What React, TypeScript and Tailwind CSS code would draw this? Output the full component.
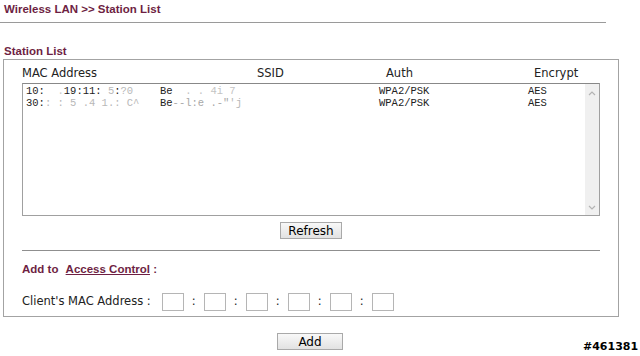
import type { ReactNode } from "react";

const maroon = "text-[#6e1f43]";

type Row = {
  mac: ReactNode;
  ssid: ReactNode;
  auth: string;
  enc: string;
};

const rows: Row[] = [
  {
    mac: (
      <>
        10:<span className="text-[#c8c8c8]">&nbsp; .</span>19:11:<span className="text-[#b8b8b8]"> 5</span>:<span className="text-[#b8b8b8]">?0</span>
      </>
    ),
    ssid: (
      <>
        Be<span className="text-[#c4c4c4]">&nbsp; . . 4i 7&nbsp;&nbsp;</span>
      </>
    ),
    auth: "WPA2/PSK",
    enc: "AES",
  },
  {
    mac: (
      <>
        30:<span className="text-[#b8b8b8]">: : 5 .4 1.: C^</span>
      </>
    ),
    ssid: (
      <>
        Be<span className="text-[#a8a8a8]">--l:e .-"</span>
        <span className="text-[#b8b8b8]">'j</span>
      </>
    ),
    auth: "WPA2/PSK",
    enc: "AES",
  },
];

function Chevron({ up }: { up?: boolean }) {
  return (
    <svg width="8" height="6" viewBox="0 0 8 6" className="block">
      <path
        d={up ? "M1 5 L4 2 L7 5" : "M1 1 L4 4 L7 1"}
        fill="none"
        stroke="#b4b4b4"
        strokeWidth="1.2"
      />
    </svg>
  );
}

function Button({ label, w }: { label: string; w: string }) {
  return (
    <button
      className={`${w} h-[17px] border border-[#a9a9a9] bg-gradient-to-b from-[#f8f8f8] to-[#e2e2e2] text-[12px] leading-[14px] text-black font-['DejaVu_Sans',sans-serif]`}
    >
      {label}
    </button>
  );
}

export default function App() {
  return (
    <div className="relative h-[356px] w-[640px] overflow-hidden bg-white font-['DejaVu_Sans',sans-serif] text-[11.5px] text-[#222]">

      {/* TITLE */}
      <div className="h-[23px] w-[606px] border-b border-[#9a9a9a] pl-[4px] pt-[2px]">
        <div className={`font-['Liberation_Sans',Arial,sans-serif] text-[11.5px] font-bold leading-[14px] ${maroon}`}>
          Wireless LAN &gt;&gt; Station List
        </div>
      </div>

      {/* SECTION HEADING */}
      <div className={`mt-[21px] h-[15px] pl-[4px] font-['Liberation_Sans',Arial,sans-serif] text-[11.5px] font-bold leading-[14px] ${maroon}`}>
        Station List
      </div>

      {/* BOX */}
      <div className="ml-[3px] box-border h-[258px] w-[616px] border border-[#a3a3a3] px-[18px] pt-[6px]">

        {/* HEADER */}
        <div className="grid h-[14px] grid-cols-[235px_129px_148px_1fr] leading-[14px] text-[#222]">
          <div>MAC Address</div>
          <div>SSID</div>
          <div>Auth</div>
          <div>Encrypt</div>
        </div>

        {/* LIST */}
        <div className="mt-[3px] flex h-[133px] border border-[#a0a0a0] border-t-[#888]">
          <div className="flex-1 pl-[3px] pt-[1px] font-['Liberation_Mono','Courier_New',monospace] text-[10.5px] leading-[12px] text-[#222]">
            {rows.map((r, i) => (
              <div key={i} className="grid grid-cols-[134px_219px_149px_1fr] whitespace-pre">
                <div>{r.mac}</div>
                <div>{r.ssid}</div>
                <div>{r.auth}</div>
                <div>{r.enc}</div>
              </div>
            ))}
          </div>
          <div className="flex w-[14px] flex-col items-center justify-between bg-[#f0f0f0] pb-[4px] pt-[6px]">
            <Chevron up />
            <Chevron />
          </div>
        </div>

        {/* REFRESH */}
        <div className="mt-[6px] flex justify-center">
          <Button label="Refresh" w="w-[62px]" />
        </div>

        <div className="mt-[11px] h-px bg-[#8f8f8f]" />

        {/* ADD TO */}
        <div className={`mt-[11px] font-['Liberation_Sans',Arial,sans-serif] text-[11.5px] font-bold leading-[14px] ${maroon}`}>
          Add to <span className="ml-[4px] underline">Access Control</span> :
        </div>

        {/* CLIENT MAC */}
        <div className="mt-[17px] flex h-[18px] items-center">
          <span className="mr-[11px]">Client's MAC Address :</span>
          {Array.from({ length: 6 }).map((_, i) => (
            <div key={i} className="flex items-center">
              {i > 0 && <span className="w-[20px] text-center">:</span>}
              <div className="h-[18px] w-[22px] border border-[#b5b5b5] bg-white" />
            </div>
          ))}
        </div>
      </div>

      {/* ADD */}
      <div className="mt-[16px] flex w-[620px] justify-center">
        <Button label="Add" w="w-[66px]" />
      </div>

      {/* WATERMARK */}
      <div className="absolute left-[583px] top-[340px] font-['DejaVu_Sans',sans-serif] text-[11px] font-bold leading-[13px] text-black [text-shadow:0_0_1px_#fff]">
        #461381
      </div>
    </div>
  );
}
